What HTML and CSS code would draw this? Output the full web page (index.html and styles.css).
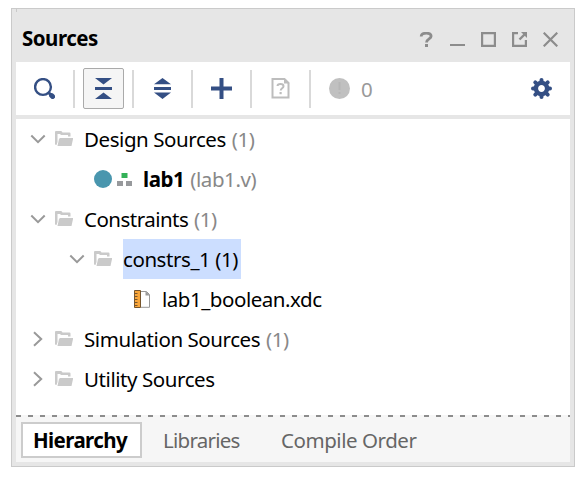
FILE: index.html
```html
<!DOCTYPE html>
<html lang="en">
<head>
<meta charset="utf-8">
<title>Sources</title>
<link rel="stylesheet" href="styles.css">
</head>
<body>
<svg class="defs" width="0" height="0">
  <symbol id="folder" viewBox="0 0 18 16">
    <path d="M0 13.500V1Q0 0 1 0h5q1 0 1.500 1.500H14.500q1 0 1 1V5.500H13V4H6L5 3H2.500v8L1.500 14z" fill="#cacaca"/>
    <path d="M5 7h13v1l-1.500 7H2.500L4 8z" fill="#cacaca"/>
  </symbol>
  <symbol id="down" viewBox="0 0 16 16"><path d="M1.300 4.500L8 11.200l6.700-6.700" fill="none" stroke="#999" stroke-width="2"/></symbol>
  <symbol id="right" viewBox="0 0 16 16"><path d="M4 1.300L11.200 8 4 14.700" fill="none" stroke="#999" stroke-width="2"/></symbol>
</svg>
<main class="window">
  <header class="titlebar">
    <h1 class="title">Sources</h1>
    <div class="controls">
      <svg width="15" height="15"><path d="M2.200 4.500C2.300 2.200 4.600 1.200 7.300 1.200c3 0 4.800 1.200 4.800 3.100C12.100 7 7.500 6.800 7.500 10.500" fill="none" stroke="#8c8c8c" stroke-width="2.800"/><path d="M6 12h3v3H6z" fill="#8c8c8c"/></svg>
      <svg width="15" height="15"><path d="M0 12h15v2H0z" fill="#8c8c8c"/></svg>
      <svg width="15" height="15"><path d="M1 1h13v13H1z" fill="none" stroke="#8c8c8c" stroke-width="2.400"/></svg>
      <svg width="15" height="15"><path d="M6 1H1v13h13V8" fill="none" stroke="#8c8c8c" stroke-width="2.400"/><path d="M7.500 7.500l5-5" stroke="#8c8c8c" stroke-width="2.400"/><path d="M9 0h6v6z" fill="#8c8c8c"/></svg>
      <svg width="15" height="15"><path d="M.7.700l13.600 13.600M14.300.700L.7 14.300" stroke="#8c8c8c" stroke-width="2.200"/></svg>
    </div>
  </header>
  <nav class="toolbar">
    <span class="tool"><svg width="21" height="21"><circle cx="9" cy="9" r="7.900" fill="none" stroke="#344f84" stroke-width="2.400"/><path d="M15 15l2.500 2.500" stroke="#344f84" stroke-width="3"/><path d="M17.600 17.600l1 1" stroke="#344f84" stroke-width="5" stroke-linecap="round"/></svg></span>
    <i class="sep"></i>
    <span class="tool active"><svg width="21" height="21" fill="#344f84"><path d="M2 0h17l-8.500 6.500zM2 9h17v3H2zM2 21h17l-8.500-6.500z"/></svg></span>
    <i class="sep"></i>
    <span class="tool"><svg width="21" height="21" fill="#344f84"><path d="M10.500 0L19 6.200H2zM2 9h17v3H2zM2 14.500h17L10.500 21z"/></svg></span>
    <i class="sep"></i>
    <span class="tool"><svg width="21" height="21"><path d="M10.500 0v21M0 10.500h21" stroke="#344f84" stroke-width="4"/></svg></span>
    <i class="sep"></i>
    <span class="tool"><svg width="21" height="21"><path d="M2.500 1h12l4 4v14.500h-16z" fill="none" stroke="#bdbdbd" stroke-width="2"/><path d="M14 0l5.500 5.500H14z" fill="#bdbdbd"/><path d="M7.500 8q0-2 3-2t3 2.200c0 2-2.800 2-2.800 4.300" fill="none" stroke="#bdbdbd" stroke-width="2"/><path d="M9.500 14h2.200v2.200H9.500z" fill="#bdbdbd"/></svg></span>
    <i class="sep"></i>
    <span class="tool"><svg width="21" height="21"><circle cx="10.500" cy="10.500" r="10.500" fill="#c0c0c0"/><path d="M10.500 4v8M10.500 14v2" stroke="#b6b6b6" stroke-width="2"/></svg></span>
    <span class="count">0</span>
    <span class="tool settings"><svg width="21" height="21" viewBox="-10.500 -10.500 21 21"><g stroke="#344f84" stroke-width="4" stroke-linecap="round"><path d="M0-8.500V-6M0 8.500V6M-8.500 0H-6M8.500 0H6M-6.200-6.200l2 2M6.200 6.200l-2-2M-6.200 6.200l2-2M6.200-6.200l-2 2"/></g><circle r="5.600" fill="none" stroke="#344f84" stroke-width="4.400"/></svg></span>
  </nav>
  <section class="tree">
    <div class="row"><svg class="chev"><use href="#down"/></svg><svg class="folder"><use href="#folder"/></svg><span class="label">Design Sources <em>(1)</em></span></div>
    <div class="row module"><svg width="18" height="18"><circle cx="9" cy="9" r="9" fill="#4996ae"/></svg><svg class="blocks" width="15" height="13"><path d="M4.500 0h6v5h-6z" fill="#34b158"/><path d="M0 8h6v5H0zM9 8h6v5H9z" fill="#97999c"/></svg><span class="label"><b>lab1</b> <em>(lab1.v)</em></span></div>
    <div class="row"><svg class="chev"><use href="#down"/></svg><svg class="folder"><use href="#folder"/></svg><span class="label tight">Constraints <em>(1)</em></span></div>
    <div class="row child"><svg class="chev"><use href="#down"/></svg><svg class="folder"><use href="#folder"/></svg><span class="label selected">constrs_1 (1)</span></div>
    <div class="row file"><svg width="17" height="18"><path d="M7 1.500h5.500l3 3v12.800H7" fill="#fff" stroke="#999"/><path d="M11.500 1l4.500 4.500h-4.500z" fill="#999"/><path d="M.5.500h6v17h-6z" fill="#f9a63a" stroke="#76552d"/><path d="M1 3.500h2.500M1 6.500h2.500M1 9.500h2.500M1 12.500h2.500M1 15.500h2.500" stroke="#76552d"/></svg><span class="label name">lab1_boolean.xdc</span></div>
    <div class="row"><svg class="chev"><use href="#right"/></svg><svg class="folder"><use href="#folder"/></svg><span class="label">Simulation Sources <em>(1)</em></span></div>
    <div class="row"><svg class="chev"><use href="#right"/></svg><svg class="folder"><use href="#folder"/></svg><span class="label">Utility Sources</span></div>
  </section>
  <div class="divider"></div>
  <footer class="tabs">
    <span class="tab current">Hierarchy</span>
    <span class="tab libraries">Libraries</span>
    <span class="tab">Compile Order</span>
  </footer>
</main>
</body>
</html>
```
FILE: styles.css
```css
* { box-sizing: border-box; }
body {
  margin: 0;
  padding: 8px 0 0 11px;
  background: #fff;
  font: 20.5px/40px "Noto Sans", "Open Sans", sans-serif;
  color: #000;
  overflow: hidden;
}
svg { display: block; flex: none; }
.defs { position: absolute; }
.window {
  width: 564px;
  height: 459px;
  padding: 0 4px 4px;
  background: #e6e6e6;
  border: 1px solid #cacaca;
}
.titlebar {
  display: flex;
  align-items: center;
  justify-content: space-between;
  height: 53px;
  padding: 5px 12px 0 5px;
  border-left: 1px solid transparent;
  border-image: linear-gradient(#cacaca 4px, transparent 4px) 1;
}
.title { margin: 0; font-size: 20.5px; line-height: 40px; letter-spacing: -.5px; }
.controls { display: flex; gap: 16px; padding-top: 3px; }
.toolbar {
  display: flex;
  align-items: center;
  gap: 8px;
  height: 53px;
  padding: 0 8px;
  background: #fff;
}
.tool {
  display: flex;
  align-items: center;
  justify-content: center;
  flex: none;
  width: 41px;
  height: 41px;
}
.active { background: #f5f5f5; border: 1px solid #aaa; border-radius: 2px; }
.sep { width: 2px; height: 38px; background: #d9d9d9; }
.count { margin-left: -7px; color: #999; }
.settings { margin-left: auto; }
.tree { height: 296px; margin-top: 4px; background: #fff; }
.row { display: flex; align-items: center; height: 40px; padding-left: 14px; }
.chev { width: 16px; height: 16px; margin-right: 9px; }
.folder { width: 18px; height: 16px; margin-right: 11px; }
.label { white-space: pre; letter-spacing: -.43px; }
.tight { letter-spacing: -.52px; }
.name { letter-spacing: -.47px; }
.label em { margin-left: 1px; font-style: normal; color: #888; }
.module { padding-left: 78px; }
.blocks { margin: 0 11px 0 5px; }
.child { padding-left: 53px; }
.file { padding-left: 118px; }
.file .label { margin-left: 11px; }
.selected { width: 118px; background: #ccdeff; }
.divider {
  height: 2px;
  background: repeating-linear-gradient(90deg, #8c8c8c 0 5px, #f6f6f6 5px 12px);
}
.tabs {
  display: flex;
  align-items: center;
  height: 45px;
  padding: 0 5px;
  background: #f6f6f6;
  color: #666;
  letter-spacing: -.45px;
}
.tab { white-space: nowrap; padding-top: 1px; }
.current {
  width: 121px;
  height: 36px;
  margin-right: 21px;
  padding: 0 0 0 10px;
  line-height: 33px;
  background: #fff;
  border: 2px solid #ccc;
  color: #000;
  font-weight: 700;
  letter-spacing: -.6px;
}
.libraries { width: 118px; letter-spacing: -.75px; }
```
